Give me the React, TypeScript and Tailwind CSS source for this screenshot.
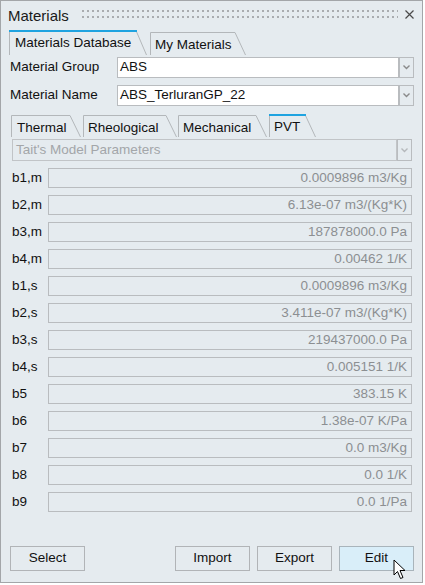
import React from 'react';

const FONT = { fontFamily: '"Liberation Sans", Arial, sans-serif' };

interface ParamRow {
  label: string;
  value: string;
}

const PARAMS: ParamRow[] = [
  { label: 'b1,m', value: '0.0009896 m3/Kg' },
  { label: 'b2,m', value: '6.13e-07 m3/(Kg*K)' },
  { label: 'b3,m', value: '187878000.0 Pa' },
  { label: 'b4,m', value: '0.00462 1/K' },
  { label: 'b1,s', value: '0.0009896 m3/Kg' },
  { label: 'b2,s', value: '3.411e-07 m3/(Kg*K)' },
  { label: 'b3,s', value: '219437000.0 Pa' },
  { label: 'b4,s', value: '0.005151 1/K' },
  { label: 'b5', value: '383.15 K' },
  { label: 'b6', value: '1.38e-07 K/Pa' },
  { label: 'b7', value: '0.0 m3/Kg' },
  { label: 'b8', value: '0.0 1/K' },
  { label: 'b9', value: '0.0 1/Pa' },
];

// tab with slanted right edge, outline drawn as svg
const Tab: React.FC<{ label: string; width: number; height: number; active?: boolean; textPad: number; top?: number }> = ({
  label,
  width,
  height,
  active,
  textPad,
  top = 0,
}) => {
  const s = 11;
  return (
    <div className="relative shrink-0" style={{ width, height }}>
      <svg className="absolute left-0 top-0" width={width} height={height}>
        <path
          d={`M0.5 ${height} V${0.5 + top} H${width - s} L${width - 0.5} ${height}`}
          fill="none"
          stroke="#b3b7ba"
          strokeWidth="1"
        />
        {active && <rect x="0" y="0" width={width - s + 1} height="2" fill="#1fa3e0" />}
      </svg>
      <span className="absolute text-[13.5px] leading-[16px] text-[#111]" style={{ left: textPad, top: top + 5 }}>
        {label}
      </span>
    </div>
  );
};

const Chevron: React.FC<{ color?: string }> = ({ color = '#8a8a8a' }) => (
  <svg width="7" height="5" viewBox="0 0 7 5">
    <path d="M0.5 0.5 L3.5 3.5 L6.5 0.5" fill="none" stroke={color} strokeWidth="1.4" />
  </svg>
);

const DropBtn: React.FC<{ light?: boolean }> = ({ light }) => (
  <div className="flex w-[15px] shrink-0 items-center justify-center border border-[#b9bcbf] bg-[#e5ebef]">
    <Chevron color={light ? '#b5b8bb' : '#8a8a8a'} />
  </div>
);

const Button: React.FC<{ label: string; hot?: boolean }> = ({ label, hot }) => (
  <div
    className={
      'flex h-[25px] w-[75px] items-center justify-center border text-[13.5px] text-[#111] ' +
      (hot ? 'border-[#a9b4bb] bg-[#d9eef9]' : 'border-[#b1b4b7] bg-[#e5ebef]')
    }
  >
    {label}
  </div>
);

const App: React.FC = () => {
  return (
    <div className="h-[585px] w-[425px] bg-white" style={FONT}>
      <div className="flex h-[583px] w-[423px] flex-col border border-[#a3a6a9] bg-[#e5ebef]">
        {/* title bar */}
        <div className="flex h-[29px] shrink-0 items-center">
          <span className="ml-[7px] mt-[2px] w-[74px] text-[15px] text-[#1a1a1a]">Materials</span>
          <svg width="316" height="9" className="mt-[-2px]">
            <defs>
              <pattern id="grip" width="5" height="6" patternUnits="userSpaceOnUse">
                <rect x="0" y="0" width="2" height="2" fill="#a9acaf" />
              </pattern>
            </defs>
            <rect x="0" y="0" width="316" height="9" fill="url(#grip)" />
          </svg>
          <svg width="9" height="9" className="ml-[7px] mt-[-2px]" viewBox="0 0 9 9">
            <path d="M0.5 0.5 L8.5 8.5 M8.5 0.5 L0.5 8.5" stroke="#4a4a4a" strokeWidth="1.2" />
          </svg>
        </div>

        {/* top tabs */}
        <div className="flex h-[25px] shrink-0 gap-[3px] pl-[8px]">
          <Tab label="Materials Database" width={138} height={25} active textPad={6} />
          <Tab label="My Materials" width={96} height={25} top={2} textPad={5} />
        </div>

        {/* material group */}
        <div className="mt-[2px] flex h-[21px] shrink-0 pl-[9px]">
          <span className="w-[107px] self-center text-[13.5px] text-[#111]">Material Group</span>
          <div className="flex w-[282px] items-center border border-[#b9bcbf] bg-white pl-[2px] text-[13.5px] text-[#111]">
            ABS
          </div>
          <DropBtn />
        </div>

        <div className="mt-[7px] flex h-[21px] shrink-0 pl-[9px]">
          <span className="w-[107px] self-center text-[13.5px] text-[#111]">Material Name</span>
          <div className="flex w-[282px] items-center border border-[#b9bcbf] bg-white pl-[2px] text-[13.5px] text-[#111]">
            ABS_TerluranGP_22
          </div>
          <DropBtn />
        </div>

        {/* property tabs */}
        <div className="mt-[8px] flex h-[23px] shrink-0 pl-[10px]">
          <Tab label="Thermal" width={70} height={23} top={1} textPad={6} />
          <div className="w-[2px]" />
          <Tab label="Rheological" width={94} height={23} top={1} textPad={5} />
          <div className="w-[1px]" />
          <Tab label="Mechanical" width={89} height={23} top={1} textPad={5} />
          <div className="w-[2px]" />
          <Tab label="PVT" width={47} height={23} active textPad={5} />
        </div>

        {/* model combo (disabled) */}
        <div className="ml-[11px] mt-[2px] flex h-[22px] shrink-0">
          <div className="flex w-[385px] items-center border border-[#c1c4c7] pl-[3px] text-[13.5px] text-[#a3a6a9]">
            Tait's Model Parameters
          </div>
          <DropBtn light />
        </div>

        {/* parameter rows */}
        <div className="mt-[7px] flex flex-col gap-[7px] pl-[11px]">
          {PARAMS.map(p => (
            <div key={p.label} className="flex h-[20px]">
              <span className="w-[36px] self-center text-[13.5px] text-[#111]">{p.label}</span>
              <div className="flex w-[364px] items-center justify-end border border-[#b9bcbf] pr-[4px] text-[13.5px] text-[#8c8f92]">
                {p.value}
              </div>
            </div>
          ))}
        </div>

        {/* buttons */}
        <div className="relative mt-auto mb-[11px] flex gap-[7px] pl-[9px] pr-[8px]">
          <Button label="Select" />
          <div className="ml-auto" />
          <Button label="Import" />
          <Button label="Export" />
          <Button label="Edit" hot />
          <svg className="absolute left-[392px] top-[13px]" width="14" height="21" viewBox="0 0 14 21">
            <path
              d="M1 1 V16 L4.5 12.5 L7.5 19.5 L10 18.5 L7 11.5 H12 Z"
              fill="#fff"
              stroke="#000"
              strokeWidth="1"
              strokeLinejoin="round"
            />
          </svg>
        </div>
      </div>
    </div>
  );
};

export default App;
